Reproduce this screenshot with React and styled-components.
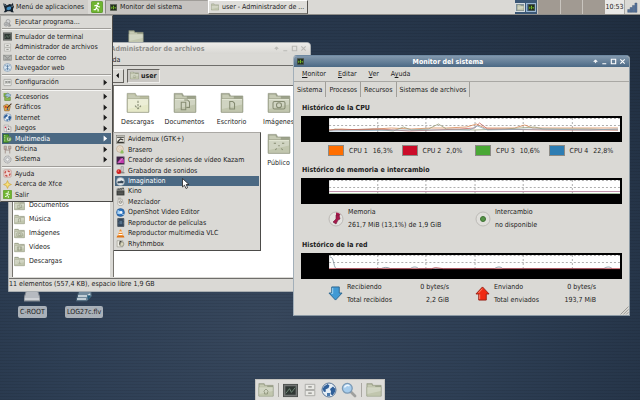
import React from "react";
import styled, { createGlobalStyle, css } from "styled-components";

const Global = createGlobalStyle`
  * { box-sizing: border-box; }
  html, body { margin: 0; height: 100%; }
  body, button {
    font-family: "DejaVu Sans Condensed", "DejaVu Sans", sans-serif;
    font-size: 7px;
    line-height: 10px;
    color: #1c1c1c;
  }
  button { margin: 0; padding: 0; border: 0; background: none; text-align: left; white-space: nowrap; }
  svg { display: block; flex: none; }
  h2, p, dl, dt, dd, ul { margin: 0; padding: 0; list-style: none; font-size: 7px; }
`;

const Desktop = styled.main`
  position: relative;
  display: flex;
  flex-direction: column;
  min-height: 100vh;
  overflow: hidden;
  background:
    repeating-linear-gradient(rgba(0, 0, 0, 0.07) 0 1px, transparent 1px 3px),
    radial-gradient(ellipse at 42% 80%, #37475c 0%, #2e3f55 40%, #1f2d3f 100%);
`;

/* ---------- icons ---------- */

const Svg = styled.svg.attrs({ viewBox: "0 0 16 16", "aria-hidden": true })`
  width: ${(p) => p.$size || 9}px;
  height: ${(p) => p.$size || 9}px;
`;

const emblems = {
  none: null,
  down: <path d="M8 6.500v5M6 9.800 8 11.800 10 9.800" strokeDasharray="1.500 .7" />,
  docs: <path d="M5.500 7.500h3v5h-3zM7.500 6h2.200l1.300 1.300V11h-2" />,
  doc: <path d="M6.500 7h2l1.200 1.200V12h-3.200z" />,
  camera: <g><rect x="4" y="7" width="8" height="5" rx="1" /><circle cx="8" cy="9.500" r="1.700" /></g>,
  music: <path d="M6.500 11.500V7l3-.8v4.500M5.500 11.500h1M8.500 10.800h1" />,
  people: <path d="M4.500 7.500h1.500M10 7.500h1.500M7.500 9.200h1M5.500 12l1-1M9.500 11l1 1" />,
  film: <path d="M5 7h6v5H5zM6.500 7v5M9.500 7v5" />,
  home: <path d="M5.500 9.500 8 7l2.500 2.500M6.500 9.500V12h3V9.500" />,
};

const Folder = ({ size = 12, emblem = "none", pale }) => (
  <Svg $size={size}>
    <path d="M.8 1.600h5.400l.9 1.700h8.100v10.800H.8z" fill={pale ? "#babd9f" : "#9da38b"} stroke="#8b907a" strokeWidth=".4" />
    <path d="M1.500 2.400h4.100l.6 1.300h3v1.400H1.500z" fill="#c6cab4" />
    <path d="M.9 5.200h14.200v9H.9z" fill={pale ? "#e6e9c8" : "#c1c6ae"} stroke="#969b84" strokeWidth=".4" />
    <path d="M1.300 5.700h13.400v3.300L1.300 12z" fill="#fff" opacity=".25" />
    <path d="M1.300 5.700h13.400" stroke="#eef0df" strokeWidth=".5" />
    <g fill="none" stroke="#858b72" strokeWidth=".7">{emblems[emblem]}</g>
  </Svg>
);

const Globe = ({ size }) => (
  <Svg $size={size}>
    <circle cx="8" cy="8" r="7" fill="#e4edf5" stroke="#5c7899" />
    <path d="M3 4.500 6.500 2l2 1.500-1 2.500L4.500 7.500l.5 2-2 .5-1.500-3zM9 7l3-2.500 2.500 2.500-.5 3-2.500 3.500-2-1.500.5-2.500z" fill="#2f5f99" />
    <path d="M6 11h3v3H6z" fill="#4a79ac" />
  </Svg>
);

const Chart = ({ size }) => (
  <Svg $size={size}>
    <rect x=".5" y="1" width="15" height="14" fill="#23301f" stroke="#595d55" />
    <path d="M3 11V6h2v5M7 12V4h2v8M11 10V7h2v3" fill="#8bd12c" />
    <path d="M2 8h12" stroke="#4c8a1d" />
  </Svg>
);

const Exit = ({ size }) => (
  <Svg $size={size}>
    <rect x=".5" y=".5" width="15" height="15" rx="1.500" fill="#6fb52f" stroke="#4f8f1d" />
    <circle cx="9.500" cy="3.500" r="1.400" fill="#fff" />
    <path d="M4.500 6.500 8 5.500 9.500 7.500 12 8M8.500 6 7 9.500 9.500 11v3M7 9.500 6 11.500H3.500" fill="none" stroke="#fff" strokeWidth="1.500" />
  </Svg>
);

const Logo = ({ size }) => (
  <Svg $size={size}>
    <path d="M0 2 3.500 3 5.500 5l4-2 3 .5L14.500 1l.5 4 1 2-1.500 3v3L16 15h-3.500l-2-1.500h-4L4 15H1l2-3L2 8z" fill="#15212c" />
    <path d="M5.500 8 9 6.500l3 .5-.5 3.500L8 12l-3-1z" fill="#3f8fc5" />
    <path d="M12 6h2.500M1 3l3 3" stroke="#cfe3ef" strokeWidth=".8" />
  </Svg>
);

const art = {
  run: <g fill="none" stroke="#87888a"><circle cx="9" cy="6" r="3.500" fill="#d1d2d3" /><circle cx="5.500" cy="11" r="3.500" fill="#c4c6c7" /><circle cx="5.500" cy="11" r="1" /><path d="M11 9l3 5-4 1z" fill="#aaa" /></g>,
  term: <g><rect x=".5" y="1.500" width="15" height="13" fill="#747776" stroke="#4b4e4c" /><rect x="2.500" y="3.500" width="11" height="9" fill="#2f3733" /><path d="M3 11l4-5 2 4 4-5" stroke="#6f8a78" fill="none" /></g>,
  cabinet: <g fill="#e8e8e4" stroke="#a5a5a1"><path d="M2.500 1.500h11v6h-11zM2.500 8.500h11v6h-11z" /><path d="M6 4.500h4M6 11.500h4" stroke="#8a8a86" strokeWidth="1.500" /></g>,
  mail: <g><path d="M1 4h14v9H1z" fill="#b7b9b6" stroke="#7e807e" /><path d="M1 4l7 5 7-5M3 11h10" stroke="#6c6e6c" fill="none" /></g>,
  config: <g><rect x="1.500" y="2.500" width="13" height="11" rx="1" fill="#eeeeec" stroke="#8b8d88" /><path d="M4 5l3 5M7 5l-3 5M9 5v5M12 5v5M8 7h5" stroke="#5b5e5a" /></g>,
  acc: <g><path d="M1 2h9v7H1z" fill="#7aa83f" /><path d="M3 6l5-4 6 3-3 5z" fill="#9fc0d8" stroke="#5e7f98" /><path d="M3 15V9l5 2 5-2v6z" fill="#8dba51" stroke="#577d2b" /></g>,
  gfx: <g><path d="M1 5l6-3 6 4-2 8H3z" fill="#e2a545" stroke="#7b5a2b" /><circle cx="5" cy="7" r="1.500" fill="#c22" /><circle cx="8" cy="11" r="1.500" fill="#3764a7" /><path d="M15 1 7 9" stroke="#4b3425" strokeWidth="2" /></g>,
  game: <g><path d="M2 2h8v11H2z" fill="#f4f2f2" stroke="#918f8f" /><path d="M6 5h8v9H6z" fill="#ece9e9" stroke="#8c8888" /><path d="M4 4l1.500 2L4 8 3 6z" fill="#c13" /><path d="M10 7l2 3h-4z" fill="#333" /></g>,
  media: <g><rect x="1" y="1" width="9" height="14" fill="#56a22c" stroke="#2f6c17" /><path d="M2 3h2M2 6h2M2 9h2M2 12h2" stroke="#fff" /><circle cx="10.500" cy="9" r="4.500" fill="#bcd7a4" stroke="#3c7626" /><path d="M10 11V6l3 1" stroke="#265019" fill="none" /></g>,
  office: <g><path d="M2 2h4v6H2zM10 2h4v5h-4z" fill="#c9b7ae" stroke="#8b7970" /><path d="M4 6v9M12 6v9M4 9h8" stroke="#9c8a82" strokeWidth="1.500" /></g>,
  system: <g fill="none" stroke="#97999a"><circle cx="8" cy="8" r="6.300" fill="#d0d1d2" strokeDasharray="2 1" strokeWidth="1.600" /><circle cx="8" cy="8" r="3" fill="#f0f0f0" /></g>,
  help: <g><rect x="1.500" y="1.500" width="13" height="13" rx="2" fill="#efd9d6" stroke="#b7847f" /><circle cx="8" cy="8" r="4.500" fill="none" stroke="#c55048" strokeWidth="2.500" strokeDasharray="4 3" /></g>,
  star: <path d="M8 1l2 5 5 2-5 2-2 5-2-5-5-2 5-2z" fill="#f6e07a" stroke="#c99b24" />,
  avid: <g><rect x="1" y="1" width="14" height="14" fill="#e7e6df" stroke="#77756c" /><path d="M2 4h12M3 12 8 7l5 2M2 13h12" stroke="#353431" strokeWidth="2" fill="none" /></g>,
  brasero: <g><circle cx="7" cy="7" r="6" fill="#e9dccb" stroke="#b29b80" /><circle cx="7" cy="7" r="2" fill="#fff" stroke="#c3a688" /><path d="M8 15c-1-4 2-4 2-7 3 2 5 5 3 7z" fill="#8fbf61" /></g>,
  kazam: <g><rect x="1" y="1" width="14" height="14" fill="#3c2445" /><path d="M2 12 9 3l5 3v7z" fill="#c33cae" /><path d="M4 13l9-10" stroke="#f0c8ec" /></g>,
  rec: <g><path d="M9 1h4v9H9z" fill="#cfcfcf" stroke="#8a8a8a" /><path d="M7 12h8" stroke="#777" strokeWidth="2" /><circle cx="5" cy="10" r="4.300" fill="#cf1d1d" /><circle cx="4" cy="9" r="1.300" fill="#f59a8e" /></g>,
  imag: <g><circle cx="8" cy="8" r="7" fill="#e5e9ec" stroke="#99a4ad" /><path d="M2 9c2-3 4 0 6-2s4 1 6 1l-2 4H4z" fill="#37495a" /><path d="M4 12h8" stroke="#f7f9fa" strokeWidth="1.500" /></g>,
  kino: <g><path d="M1 6h14v9H1z" fill="#3b3e3c" /><path d="M1 3l13-2 .5 3L1.500 6z" fill="#787b78" /><path d="M4 2.500l2 3M8 2l2 3M12 1.500l2 3" stroke="#222" /><path d="M3 9h10M3 12h10" stroke="#777" /></g>,
  mixer: <g><path d="M4 4h7l2 8-2 3H5l-2-3z" fill="#f1f0ec" stroke="#96938b" /><circle cx="8" cy="9" r="2.500" fill="#c9c7c0" stroke="#77756e" /><path d="M3 2h6" stroke="#88857d" /></g>,
  openshot: <g><circle cx="8" cy="8" r="7" fill="#2f74bd" stroke="#1e4f89" /><path d="M3 3l5 3-1 5-5-1z" fill="#a6d0f3" /><circle cx="9" cy="8" r="2.500" fill="#f4f8fc" /><path d="M11 11l3 1" stroke="#cde4f7" strokeWidth="1.500" /></g>,
  movie: <g><path d="M3 1h11v14H3z" fill="#33465a" stroke="#222e3b" /><path d="M4 2v12M13 2v12" stroke="#9aa8b5" strokeDasharray="1 1.500" /><path d="M6 5h5v6H6z" fill="#55718b" /></g>,
  vlc: <g><path d="M2 12h12l1 3H1z" fill="#e07414" /><path d="M7 1h2l4 11H3z" fill="#f08a24" /><path d="M6 4.500h4l.7 2H5.300zM4.600 9h6.800l.6 1.500H4z" fill="#fff" /></g>,
  rhythm: <g><path d="M2 3h10v11H2z" fill="#efeee6" stroke="#8e8c80" /><circle cx="10" cy="9" r="4" fill="#d7d5bc" stroke="#78766a" /><path d="M7 10V4l3 1" stroke="#302f2a" strokeWidth="1.500" fill="none" /></g>,
  info: <g><circle cx="8" cy="8" r="7" fill="#d9e6f1" stroke="#6987a4" /><path d="M8 3v10M4 4.500c3 2 5 2 8 0M4 11.500c3-2 5-2 8 0" stroke="#4d749b" strokeWidth="1.300" fill="none" /></g>,
};

const Icon = ({ name, size = 9 }) => {
  if (name === "exit") return <Exit size={size} />;
  if (name === "globe") return <Globe size={size} />;
  return <Svg $size={size}>{art[name]}</Svg>;
};

/* ---------- top panel ---------- */

const Panel = styled.header`
  position: relative;
  z-index: 5;
  display: flex;
  align-items: stretch;
  height: 15px;
  background: #dad9d5;
  border-bottom: 1px solid #8f8e8a;
`;

const MenuButton = styled.button`
  display: flex;
  align-items: center;
  gap: 2px;
  width: 88px;
  padding-left: 3px;
  background: #cfcdc9;
`;

const Launcher = styled.button`
  display: grid;
  place-items: center;
  width: ${(p) => p.$width}px;
`;

const Task = styled.button`
  display: flex;
  align-items: center;
  gap: 3px;
  width: ${(p) => (p.$active ? 103 : 100)}px;
  padding-left: ${(p) => (p.$active ? 4 : 2)}px;
  border: 1px solid;
  ${(p) =>
    p.$active
      ? css`background: #c6c3c0; border-color: #a09d99 #c6c3c0 #c6c3c0 #8d8a87;`
      : css`background: #dfdeda; border-color: #fff #55534f #77756f #fff;`}
`;

const Pager = styled.div`
  display: grid;
  grid-template-columns: repeat(4, 1fr);
  gap: 1px;
  width: 90px;
  margin-left: auto;
  background: #c9c5bf;
`;

const Workspace = styled.button`
  display: flex;
  align-items: center;
  justify-content: center;
  gap: 1px;
  background: ${(p) => (p.$active ? "#3b5775" : "#a19a92")};
`;

const MiniWindow = styled.span`
  display: grid;
  place-items: center;
  width: 10px;
  height: 9px;
  border: 1px solid ${(p) => (p.$focus ? "#9ab6d2" : "#d7dde0")};
  background: ${(p) => (p.$focus ? "#49719a" : "#7e919d")};
`;

const Clock = styled.time`
  display: grid;
  place-items: center;
  width: 20px;
  background: #e9e8e6;
  border-right: 1px solid #aaa8a4;
`;

/* ---------- windows ---------- */

const Window = styled.section`
  position: absolute;
  display: flex;
  flex-direction: column;
  background: #dad9d5;
  border: 1px solid #a9aeb1;
  border-radius: 4px 4px 0 0;
  overflow: hidden;
`;

const FilesWindow = styled(Window)`
  z-index: 1;
  top: 42px;
  left: 8px;
  width: 47.4%;
`;

const MonitorWindow = styled(Window)`
  z-index: 2;
  top: 55px;
  left: 293px;
  right: 10px;
  border-color: #6f8aa3 #8b99a4 #8b99a4 #a2afb9;
`;

const TitleBar = styled.div`
  display: flex;
  align-items: center;
  height: 11px;
  padding: 0 3px;
  font-weight: bold;
  color: ${(p) => (p.$active ? "#fff" : "#8f8f8c")};
  background: ${(p) => (p.$active ? "linear-gradient(#8298ad, #4b6985)" : "linear-gradient(#ecebe8, #d8d7d3)")};
`;

const Title = styled.span`
  flex: 1;
  text-align: center;
`;

const WindowButtons = styled.div`
  display: flex;
  gap: 2px;
`;

const WindowButton = styled.button`
  display: grid;
  place-items: center;
  width: 7px;
  height: 9px;
  color: ${(p) => (p.$active ? "#fff" : "#b9b8b4")};
`;

const controlMarks = {
  Fijar: <path d="M4 8h8L8 4zM7.500 9h1v2h-1z" fill="currentColor" strokeWidth="1.500" />,
  Minimizar: <path d="M3 13h9" />,
  Maximizar: <path d="M3 3h10v10H3z" />,
  Cerrar: <path d="M3 3l10 10M13 3 3 13" />,
};

const Controls = ({ active }) => (
  <WindowButtons>
    {Object.entries(controlMarks).map(([label, mark]) => (
      <WindowButton key={label} aria-label={label} $active={active}>
        <Svg $size={7}><g fill="none" stroke="currentColor" strokeWidth="2.500">{mark}</g></Svg>
      </WindowButton>
    ))}
  </WindowButtons>
);

const MenuBar = styled.nav`
  display: flex;
  align-items: center;
  gap: 12px;
  height: 15px;
  padding: 0 8px;
  border-bottom: 1px solid #a9a8a4;
`;

const FilesMenuBar = styled(MenuBar)`
  height: 12px;
  padding-left: 92px;
  border-color: #6f6e6b;
`;

const ToolBar = styled.div`
  display: flex;
  align-items: center;
  gap: 3px;
  height: 20px;
  padding-left: 102px;
  border-bottom: 1px solid #6f6e6b;
`;

const PathButton = styled.button`
  display: flex;
  align-items: center;
  gap: 2px;
  height: 14px;
  padding: 0 2px;
  font-weight: bold;
  border: 1px solid;
  border-color: ${(p) => (p.$pressed ? "#65635f #efeeec #efeeec #65635f" : "#efeeec #65635f #65635f #efeeec")};
  background: ${(p) => (p.$pressed ? "#c9c7c3" : "#dad9d5")};
`;

const FilesBody = styled.div`
  display: flex;
  gap: 3px;
  height: 191px;
  padding: 0 3px;
`;

const Sidebar = styled.ul`
  display: flex;
  flex-direction: column;
  justify-content: flex-end;
  width: 98px;
  padding: 0 1px 9px;
  background: #fff;
  border: 1px solid #77756f;
  border-width: 0 0 0 1px;
`;

const Place = styled.button`
  display: flex;
  align-items: center;
  gap: 4px;
  height: 14px;
`;

const IconView = styled.div`
  flex: 1;
  display: grid;
  grid-template-columns: repeat(4, 47px);
  grid-auto-rows: 41px;
  padding-top: 5px;
  background: #fff;
  border-left: 1px solid #77756f;
`;

const FileItem = styled.button`
  display: flex;
  flex-direction: column;
  align-items: center;
  gap: 2px;
  grid-column: ${(p) => p.$column || "auto"};
`;

const StatusBar = styled.footer`
  height: 13px;
  line-height: 11px;
  margin-top: 1px;
  border-top: 1px solid #6f6e6b;
`;

/* ---------- system monitor ---------- */

const Tabs = styled.div`
  display: flex;
  height: 15px;
`;

const Tab = styled.button`
  padding: 0 3px;
  border-right: 1px solid #a19f9a;
`;

const Section = styled.section`
  padding: 0 7px;
  margin-top: ${(p) => p.$space}px;
`;

const Heading = styled.h2`
  padding-left: 1px;
  margin-bottom: 3px;
  font-weight: bold;
  line-height: 10px;
`;

const Plot = styled.svg`
  width: 100%;
  height: 26px;
`;

const Columns = styled.div`
  display: grid;
  grid-template-columns: repeat(${(p) => p.$count}, 1fr);
  margin: 3px 0 0 27px;
`;

const Legend = styled.div`
  display: flex;
  align-items: center;
  gap: 5px;
`;

const Swatch = styled.button`
  width: 16px;
  height: 11px;
  border: 1px solid #8b8a85;
  background: ${(p) => p.$color};
`;

const Reading = styled.div`
  display: flex;
  align-items: center;
  gap: 4px;
`;

const Lines = styled.div`
  display: grid;
  gap: 3px;
  width: 102px;
  white-space: nowrap;
`;

const Pair = styled.p`
  display: flex;
  justify-content: space-between;
`;

const Grip = styled.div`
  display: flex;
  justify-content: flex-end;
  margin-top: 1px;
`;

const Graph = ({ children }) => (
  <Plot viewBox="0 0 320 26" preserveAspectRatio="none" aria-hidden="true">
    <rect width="320" height="26" fill="#000" />
    <rect x="28" y="2" width="290" height="14" fill="#fff" />
    <g stroke="#9b9b9b" strokeWidth=".8" strokeDasharray="2 2" fill="none">
      <path d="M28 2.500h290M28 9.500h290M76.500 2v14M124.500 2v14M173.500 2v14M221.500 2v14M270.500 2v14" />
    </g>
    <g fill="none" strokeWidth=".8">{children}</g>
  </Plot>
);

/* ---------- menus ---------- */

const Menu = styled.nav`
  position: absolute;
  z-index: 6;
  display: flex;
  flex-direction: column;
  padding: 1px;
  background: #dad9d5;
  border: 1px solid;
  border-color: #aaa8a4 #4c4b49 #4c4b49 #aaa8a4;
`;

const MainMenu = styled(Menu)`
  top: 15px;
  left: 0;
  width: 113px;
  height: 187px;
`;

const SubMenu = styled(Menu)`
  top: 132px;
  left: 113px;
  width: 148px;
  height: 119px;
`;

const Entry = styled.button`
  display: flex;
  align-items: center;
  gap: 3px;
  flex: 1;
  min-height: 0;
  padding: 0 3px 0 1px;
  ${(p) => p.$selected && css`background: #4b6983; color: #fff;`}
`;

const Label = styled.span`
  flex: 1;
`;

const Divider = styled.hr`
  width: 100%;
  height: 4px;
  margin: 0;
  border: 0;
  background: linear-gradient(transparent 1px, #9f9d99 1px 2px, #f5f5f3 2px 3px, transparent 3px);
`;

const Arrow = () => <Svg $size={7}><path d="M6 1v14l8-7z" fill="currentColor" /></Svg>;

const groups = [
  [["run", "Ejecutar programa..."]],
  [["term", "Emulador de terminal"], ["cabinet", "Administrador de archivos"], ["mail", "Lector de correo"], ["info", "Navegador web"]],
  [["config", "Configuración", true]],
  [["acc", "Accesorios", true], ["gfx", "Gráficos", true], ["globe", "Internet", true], ["game", "Juegos", true], ["media", "Multimedia", true], ["office", "Oficina", true], ["system", "Sistema", true]],
  [["help", "Ayuda"], ["star", "Acerca de Xfce"], ["exit", "Salir"]],
];

const programs = [
  ["avid", "Avidemux (GTK+)"], ["brasero", "Brasero"], ["kazam", "Creador de sesiones de vídeo Kazam"],
  ["rec", "Grabadora de sonidos"], ["imag", "Imagination"], ["kino", "Kino"], ["mixer", "Mezclador"],
  ["openshot", "OpenShot Video Editor"], ["movie", "Reproductor de películas"],
  ["vlc", "Reproductor multimedia VLC"], ["rhythm", "Rhythmbox"],
];

/* ---------- desktop items and dock ---------- */

const DesktopItem = styled.button`
  position: absolute;
  top: ${(p) => p.$top}px;
  left: ${(p) => p.$left}px;
  display: flex;
  flex-direction: column;
  align-items: center;
  gap: 4px;
`;

const Caption = styled.span`
  padding: 1px 2px;
  border-radius: 2px;
  background: #a9b0b8;
`;

const Dock = styled.nav`
  position: absolute;
  z-index: 4;
  bottom: 0;
  left: 50%;
  transform: translateX(-50%);
  display: flex;
  align-items: center;
  gap: 4px;
  height: 21px;
  padding: 0 2px;
  background: #dedddA;
  border: 1px solid #c3c2be;
  border-bottom: 0;
`;

const DockRule = styled.span`
  width: 1px;
  height: 14px;
  background: #aaa8a3;
`;

const Pointer = styled.svg`
  position: absolute;
  z-index: 7;
  top: 178px;
  left: 182px;
  width: 8px;
  height: 11px;
`;

const Drive = () => (
  <Svg $size={16}>
    <path d="M3 3h10l3 9v3H0v-3z" fill="#b6bac0" stroke="#82888f" />
    <path d="M1 12h14v2H1z" fill="#cfd2d6" />
  </Svg>
);

const Clip = () => (
  <Svg $size={16}>
    <path d="M4 1h10l2 9-5 5H0z" fill="#71899b" stroke="#3f5568" />
    <path d="M2 10h9l3-2M1 13h9" stroke="#dce5ea" strokeWidth="1.500" fill="none" />
    <path d="M11 9l4 1-3 4z" fill="#245b78" />
  </Svg>
);

const Lens = () => (
  <Svg $size={16}>
    <path d="M9.500 9.500 14 14" stroke="#9fa09e" strokeWidth="2.800" strokeLinecap="round" />
    <circle cx="6.300" cy="6.300" r="4.900" fill="#a6ccec" stroke="#7b99b4" strokeWidth="1.300" />
    <path d="M3.500 5.500c1-2.500 3.500-2.500 5-1.500" stroke="#eff7fd" strokeWidth="1.500" fill="none" />
  </Svg>
);

const Signal = () => (
  <Svg $size={11}>
    <path d="M1 15v-4h3v4zM4.500 15V8h3v7zM8 15V5h3v10zM11.500 15V1.500h3V15z" fill="#54729b" stroke="#3a5272" strokeWidth=".6" />
  </Svg>
);

const BigArrow = ({ up }) => (
  <Svg $size={15}>
    {up
      ? <path d="M8 1l7 7.500h-3V15H4V8.500H1z" fill="#f02a12" stroke="#962014" />
      : <path d="M8 15 1 7.500h3V1h8v6.500h3z" fill="#419ad4" stroke="#2b658f" />}
    <path d={up ? "M8 2.800 3.500 7.600M5 9v5" : "M5 2v6H3.500"} fill="none" stroke={up ? "#ff8a72" : "#a4d8f5"} />
  </Svg>
);

const cpus = [
  ["CPU 1", "16,3%", "#ff6e00"], ["CPU 2", "2,0%", "#cb0c29"],
  ["CPU 3", "10,6%", "#49a835"], ["CPU 4", "22,8%", "#2d7db3"],
];

export default function App() {
  return (
    <Desktop>
      <Global />
      <Panel>
        <MenuButton><Logo size={11} />Menú de aplicaciones</MenuButton>
        <Launcher $width={17} aria-label="Salir"><Exit size={12} /></Launcher>
        <Task $active><Chart size={7} />Monitor del sistema</Task>
        <Task><Folder size={8} />user - Administrador de ...</Task>
        <Pager>
          <Workspace $active aria-label="Espacio 1">
            <MiniWindow><Folder size={7} /></MiniWindow>
            <MiniWindow $focus><Chart size={7} /></MiniWindow>
          </Workspace>
          <Workspace aria-label="Espacio 2" />
          <Workspace aria-label="Espacio 3" />
          <Workspace aria-label="Espacio 4" />
        </Pager>
        <Clock>10:53</Clock>
        <Launcher $width={15} aria-label="Red"><Signal /></Launcher>
      </Panel>

      <DesktopItem $top={29} $left={128} aria-label="Carpeta"><Folder size={16} /></DesktopItem>
      <DesktopItem $top={286} $left={18}><Drive /><Caption>C-ROOT</Caption></DesktopItem>
      <DesktopItem $top={286} $left={65}><Clip /><Caption>LOG27c.flv</Caption></DesktopItem>

      <FilesWindow aria-label="Administrador de archivos">
        <TitleBar>
          <Folder size={7} />
          <Title>user - Administrador de archivos</Title>
          <Controls />
        </TitleBar>
        <FilesMenuBar><button>Ayuda</button></FilesMenuBar>
        <ToolBar>
          <PathButton aria-label="Anterior"><Svg $size={7}><path d="M11 2v12L5 8z" /></Svg></PathButton>
          <PathButton $pressed><Folder size={9} emblem="home" />user</PathButton>
        </ToolBar>
        <FilesBody>
          <Sidebar>
            {[["docs", "Documentos"], ["music", "Música"], ["camera", "Imágenes"], ["film", "Vídeos"], ["down", "Descargas"]].map(([e, t]) => (
              <li key={t}><Place><Folder size={11} emblem={e} />{t}</Place></li>
            ))}
          </Sidebar>
          <IconView>
            <FileItem><Folder size={24} emblem="down" pale />Descargas</FileItem>
            <FileItem><Folder size={24} emblem="docs" />Documentos</FileItem>
            <FileItem><Folder size={24} emblem="doc" />Escritorio</FileItem>
            <FileItem><Folder size={24} emblem="camera" />Imágenes</FileItem>
            <FileItem $column={4}><Folder size={24} emblem="people" />Público</FileItem>
          </IconView>
        </FilesBody>
        <StatusBar>11 elementos (557,4 KB), espacio libre 1,9 GB</StatusBar>
      </FilesWindow>

      <MonitorWindow aria-label="Monitor del sistema">
        <TitleBar $active>
          <Chart size={7} />
          <Title>Monitor del sistema</Title>
          <Controls active />
        </TitleBar>
        <MenuBar>
          <button><u>M</u>onitor</button><button><u>E</u>ditar</button><button><u>V</u>er</button><button>A<u>y</u>uda</button>
        </MenuBar>
        <Tabs role="tablist">
          {["Sistema", "Procesos", "Recursos", "Sistemas de archivos"].map((t) => (
            <Tab role="tab" key={t}>{t}</Tab>
          ))}
        </Tabs>
        <Section $space={6}>
          <Heading>Histórico de la CPU</Heading>
          <Graph>
            <path d="M28 14l12-1 20 1 30-2 20 1 20-1 15 0 20-1 10-3 8 4 30 0 10-3 8 3 40 0 45 0" stroke="#d98a58" />
            <path d="M28 15l6-2 8 1 30-1 20 2 10-4 8 3 17-1 10-5 8 5 28 1 30-1 30-2 8 2 30 0 15 0 30 1" stroke="#9a9f7c" />
            <path d="M28 14l50-1 30 2 50-2 15-1 5-5 8 6 60 1 70 0" stroke="#c46660" />
            <path d="M28 15l80-1 60 0 8-4 10 4 50-1 52 1 28-1" stroke="#8aa9bd" />
          </Graph>
          <Columns $count={4}>
            {cpus.map(([name, value, color]) => (
              <Legend key={name}>
                <Swatch aria-label={`Color de ${name}`} $color={color} />
                <span>{name}</span><span>{value}</span>
              </Legend>
            ))}
          </Columns>
        </Section>
        <Section $space={9}>
          <Heading>Histórico de memoria e intercambio</Heading>
          <Graph><path d="M28 13.500h290" stroke="#b07896" /><path d="M28 15.500h290" stroke="#93b28e" /></Graph>
          <Columns $count={2}>
            <Reading>
              <Svg $size={16}><circle cx="8" cy="8" r="7" fill="#e3e2df" stroke="#bbb9b5" /><path d="M8 8V1.500A6.500 6.500 0 0 1 12.500 3.500z" fill="#a8184b" /><path d="M8 4v4l-3 3 3 2 2-4 2-1-1-4z" fill="#a8184b" stroke="#6c1737" strokeWidth=".6" /></Svg>
              <Lines><p>Memoria</p><p>261,7 MiB (13,1%) de 1,9 GiB</p></Lines>
            </Reading>
            <Reading>
              <Svg $size={16}><circle cx="8" cy="8" r="7" fill="#e0dfdb" stroke="#bcbab6" /><circle cx="8" cy="8" r="2.500" fill="#559447" stroke="#3e7134" /></Svg>
              <Lines><p>Intercambio</p><p>no disponible</p></Lines>
            </Reading>
          </Columns>
        </Section>
        <Section $space={10}>
          <Heading>Histórico de la red</Heading>
          <Graph>
            <path d="M29 4c4 0 3 9 6 11.500h45c3-1.500 6-1.500 9 0h20c3-2 6-2 8 0h76c3-2 6-2 8 0h101c3-2 6-2 8 0" stroke="#7d8d98" />
            <path d="M28 15.700h102l4-1 8 1h176" stroke="#b3323c" />
          </Graph>
          <Columns $count={2}>
            <Reading>
              <BigArrow />
              <Lines>
                <Pair><span>Recibiendo</span><span>0 bytes/s</span></Pair>
                <Pair><span>Total recibidos</span><span>2,2 GiB</span></Pair>
              </Lines>
            </Reading>
            <Reading>
              <BigArrow up />
              <Lines>
                <Pair><span>Enviando</span><span>0 bytes/s</span></Pair>
                <Pair><span>Total enviados</span><span>193,7 MiB</span></Pair>
              </Lines>
            </Reading>
          </Columns>
        </Section>
        <Grip><Svg $size={9}><path d="M1 15 15 1M6 15l9-9M11 15l4-4" stroke="#8f8e89" strokeWidth="1.500" /></Svg></Grip>
      </MonitorWindow>

      <MainMenu aria-label="Aplicaciones">
        {groups.map((group, i) => (
          <React.Fragment key={i}>
            {i > 0 && <Divider />}
            {group.map(([icon, text, more]) => (
              <Entry key={text} $selected={text === "Multimedia"}>
                <Icon name={icon} /><Label>{text}</Label>{more && <Arrow />}
              </Entry>
            ))}
          </React.Fragment>
        ))}
      </MainMenu>
      <SubMenu aria-label="Multimedia">
        {programs.map(([icon, text]) => (
          <Entry key={text} $selected={text === "Imagination"}>
            <Icon name={icon} /><Label>{text}</Label>
          </Entry>
        ))}
      </SubMenu>
      <Pointer viewBox="0 0 8 11" aria-hidden="true">
        <path d="M.5.500v8.500l2-1.800 1.500 3.300 1.600-.8L4.200 6.500H7z" fill="#fff" stroke="#222" strokeWidth=".8" />
      </Pointer>

      <Dock>
        <Launcher $width={16} aria-label="Escritorio"><Folder size={16} emblem="home" /></Launcher>
        <DockRule />
        <Launcher $width={15} aria-label="Terminal"><Icon name="term" size={15} /></Launcher>
        <Launcher $width={15} aria-label="Archivos"><Icon name="cabinet" size={14} /></Launcher>
        <Launcher $width={16} aria-label="Navegador"><Globe size={16} /></Launcher>
        <Launcher $width={16} aria-label="Buscar"><Lens /></Launcher>
        <DockRule />
        <Launcher $width={16} aria-label="Carpeta"><Folder size={16} /></Launcher>
      </Dock>
    </Desktop>
  );
}
